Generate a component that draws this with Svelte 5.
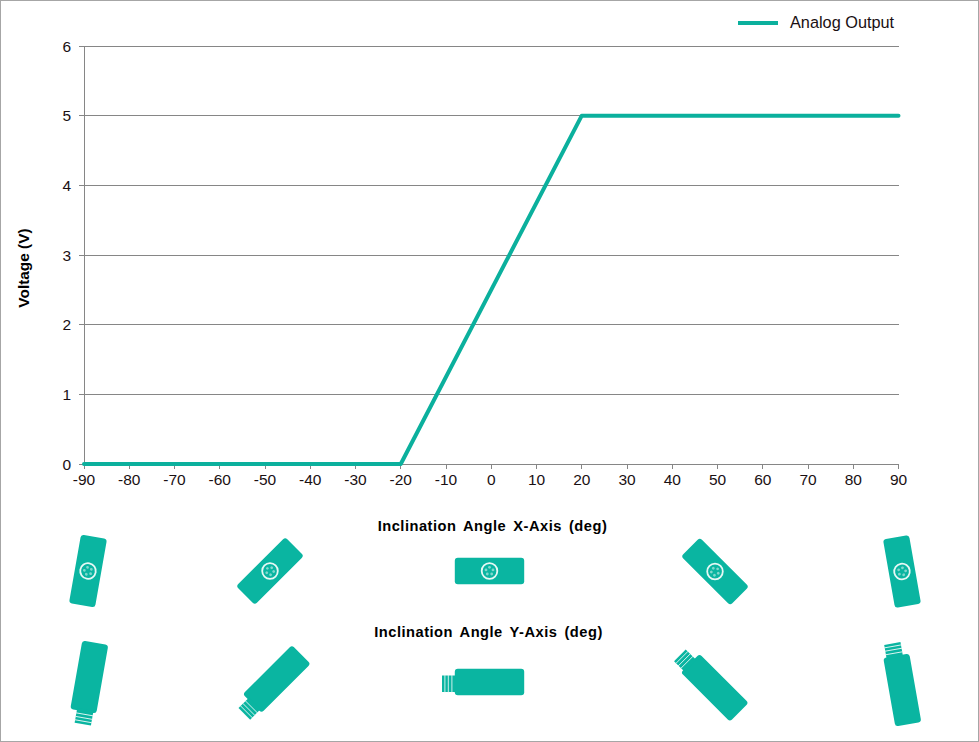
<script>
  const left = 84, right = 898.5, top = 46, bottom = 464;
  const xStep = (right - left) / 18;
  const yStep = (bottom - top) / 6;
  const xTicks = Array.from({ length: 19 }, (_, i) => ({ v: -90 + i * 10, x: left + i * xStep }));
  const yTicks = Array.from({ length: 7 }, (_, i) => ({ v: i, y: bottom - i * yStep }));
  const px = (a) => left + ((a + 90) / 180) * (right - left);
  const py = (v) => bottom - v * yStep;
  const points = [[-90, 0], [-20, 0], [20, 5], [90, 5]].map(([a, v]) => `${px(a)},${py(v)}`).join(' ');
  const faces = [
    { x: 88, y: 571, r: -80 },
    { x: 270, y: 571, r: -45 },
    { x: 489.5, y: 571, r: 0 },
    { x: 715, y: 571.5, r: 45 },
    { x: 902, y: 571.5, r: 80 }
  ];
  const sides = [
    { x: 89.3, y: 677, r: -80 },
    { x: 276.7, y: 679, r: -45 },
    { x: 489.5, y: 682, r: 0 },
    { x: 714.7, y: 687.7, r: 45 },
    { x: 902.3, y: 690, r: 80 }
  ];
  const pins = [[0, -3.7], [3.5, -1.1], [2.2, 3], [-2.2, 3], [-3.5, -1.1]];
</script>

<div class="frame">
  <svg width="977" height="740" viewBox="1 1 977 740" role="img" aria-label="Analog output voltage versus inclination angle">
    <defs>
      <g id="face">
        <rect class="teal" x="-34.7" y="-13.2" width="69.4" height="26.4" rx="3" />
        <circle class="ring" r="7.8" />
        {#each pins as [cx, cy]}
          <circle class="pin" {cx} {cy} r="1.4" />
        {/each}
      </g>
      <g id="side">
        <rect class="teal" x="-34.7" y="-13.2" width="69.4" height="26.4" rx="3" />
        <rect class="teal" x="-47.5" y="-6.5" width="15" height="16.5" />
        <path class="thread" d="M-44.6 -7V10.5M-41.2 -7V10.5M-37.6 -7V10.5" />
      </g>
    </defs>

    {#each yTicks as t}
      <line class="grid" x1={left - 5} x2={right} y1={t.y} y2={t.y} />
      <text class="tick" x="71" y={t.y + 5.5} text-anchor="end">{t.v}</text>
    {/each}
    <line class="grid" x1={left} x2={left} y1={top} y2={bottom} />
    {#each xTicks as t}
      <line class="grid" x1={t.x} x2={t.x} y1={bottom} y2={bottom + 5} />
      <text class="tick" x={t.x} y="485" text-anchor="middle">{t.v}</text>
    {/each}

    <polyline class="series" {points} />

    <line class="legend-line" x1="738" x2="778" y1="23" y2="23" />
    <text class="legend" x="790" y="28">Analog Output</text>

    <text class="title axis" transform="translate(29 268) rotate(-90)" text-anchor="middle">Voltage (V)</text>
    <text class="title wide" x="492.5" y="531" text-anchor="middle">Inclination Angle X-Axis (deg)</text>
    <text class="title wide" x="488.5" y="637" text-anchor="middle">Inclination Angle Y-Axis (deg)</text>

    {#each faces as f}
      <use href="#face" transform="translate({f.x} {f.y}) rotate({f.r})" />
    {/each}
    {#each sides as s}
      <use href="#side" transform="translate({s.x} {s.y}) rotate({s.r})" />
    {/each}
  </svg>
</div>

<style>
  :global(body) {
    margin: 0;
    background: #fff;
  }
  .frame {
    width: 977px;
    height: 740px;
    border: 1px solid #a6a6a6;
    background: #fff;
    overflow: hidden;
  }
  svg {
    display: block;
  }
  text {
    font-family: "Liberation Sans", Arial, sans-serif;
    fill: #1a1013;
  }
  .grid {
    stroke: #868686;
    stroke-width: 1;
    shape-rendering: crispEdges;
  }
  .tick {
    font-size: 15.5px;
  }
  .legend {
    font-size: 16.3px;
  }
  .title {
    font-size: 14.67px;
    font-weight: 700;
    fill: #000;
  }
  .axis {
    font-size: 15.4px;
  }
  .wide {
    letter-spacing: 0.5px;
    word-spacing: 2.5px;
  }
  .series {
    fill: none;
    stroke: #0bb09d;
    stroke-width: 4;
    stroke-linecap: round;
    stroke-linejoin: round;
  }
  .legend-line {
    stroke: #0bb09d;
    stroke-width: 4;
  }
  .teal {
    fill: #0ab5a1;
  }
  .ring {
    fill: #0ab5a1;
    stroke: #e6f8f5;
    stroke-width: 1.8;
  }
  .pin {
    fill: #7fd8cc;
  }
  .thread {
    fill: none;
    stroke: #e4f7f4;
    stroke-width: 0.9;
  }
</style>
